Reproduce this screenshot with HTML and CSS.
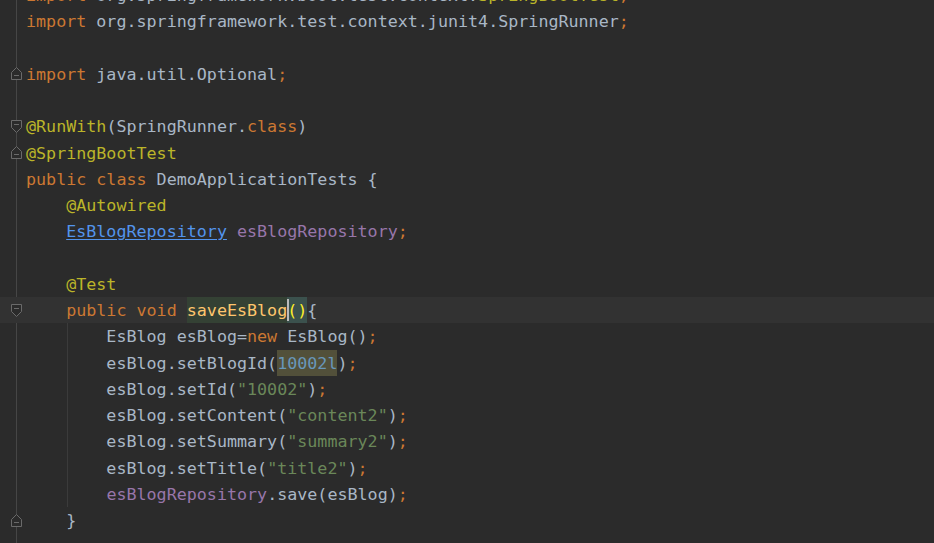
FILE: index.html
```html
<!DOCTYPE html>
<html lang="en">
<head>
    <meta charset="UTF-8">
    <title>DemoApplicationTests.java</title>
    <link rel="stylesheet" href="styles.css">
</head>
<body>
    <div class="editor">
        <div class="line"><span class="fold"></span><span class="code"><span class="kw">import</span> org.springframework.boot.test.context.<span class="ann">SpringBootTest</span><span class="kw">;</span></span></div>
        <div class="line"><span class="fold"></span><span class="code"><span class="kw">import</span> org.springframework.test.context.junit4.SpringRunner<span class="kw">;</span></span></div>
        <div class="line"><span class="fold"></span><span class="code"> </span></div>
        <div class="line"><span class="fold"><svg width="11" height="13" viewBox="0 0 11 13"><path class="mark" d="M0.5 12.5H10.5V5.5L5.5 0.5L0.5 5.5Z"/><path class="minus" d="M3 8.5H8"/></svg></span><span class="code"><span class="kw">import</span> java.util.Optional<span class="kw">;</span></span></div>
        <div class="line"><span class="fold"></span><span class="code"> </span></div>
        <div class="line"><span class="fold"><svg width="11" height="13" viewBox="0 0 11 13"><path class="mark" d="M0.5 0.5H10.5V7.5L5.5 12.5L0.5 7.5Z"/><path class="minus" d="M3 4.5H8"/></svg></span><span class="code"><span class="ann">@RunWith</span>(SpringRunner.<span class="kw">class</span>)</span></div>
        <div class="line"><span class="fold"><svg width="11" height="13" viewBox="0 0 11 13"><path class="mark" d="M0.5 12.5H10.5V5.5L5.5 0.5L0.5 5.5Z"/><path class="minus" d="M3 8.5H8"/></svg></span><span class="code"><span class="ann">@SpringBootTest</span></span></div>
        <div class="line"><span class="fold"></span><span class="code"><span class="kw">public class</span> DemoApplicationTests {</span></div>
        <div class="line"><span class="fold"></span><span class="code">    <span class="ann">@Autowired</span></span></div>
        <div class="line"><span class="fold"></span><span class="code">    <span class="link">EsBlogRepository</span> <span class="field">esBlogRepository</span><span class="kw">;</span></span></div>
        <div class="line"><span class="fold"></span><span class="code"> </span></div>
        <div class="line"><span class="fold"></span><span class="code">    <span class="ann">@Test</span></span></div>
        <div class="line current"><span class="fold"><svg width="11" height="13" viewBox="0 0 11 13"><path class="mark" d="M0.5 0.5H10.5V7.5L5.5 12.5L0.5 7.5Z"/><path class="minus" d="M3 4.5H8"/></svg></span><span class="code">    <span class="kw">public void</span> <span class="decl">saveEsBlog</span><span class="caret"></span><span class="paren">()</span>{</span></div>
        <div class="body">
            <div class="line"><span class="fold"></span><span class="code">        EsBlog esBlog=<span class="kw">new</span> EsBlog()<span class="kw">;</span></span></div>
            <div class="line"><span class="fold"></span><span class="code">        esBlog.setBlogId(<span class="num">10002l</span>)<span class="kw">;</span></span></div>
            <div class="line"><span class="fold"></span><span class="code">        esBlog.setId(<span class="str">"10002"</span>)<span class="kw">;</span></span></div>
            <div class="line"><span class="fold"></span><span class="code">        esBlog.setContent(<span class="str">"content2"</span>)<span class="kw">;</span></span></div>
            <div class="line"><span class="fold"></span><span class="code">        esBlog.setSummary(<span class="str">"summary2"</span>)<span class="kw">;</span></span></div>
            <div class="line"><span class="fold"></span><span class="code">        esBlog.setTitle(<span class="str">"title2"</span>)<span class="kw">;</span></span></div>
            <div class="line"><span class="fold"></span><span class="code">        <span class="field">esBlogRepository</span>.save(esBlog)<span class="kw">;</span></span></div>
        </div>
        <div class="line"><span class="fold"><svg width="11" height="13" viewBox="0 0 11 13"><path class="mark" d="M0.5 12.5H10.5V5.5L5.5 0.5L0.5 5.5Z"/><path class="minus" d="M3 8.5H8"/></svg></span><span class="code">    }</span></div>
    </div>
</body>
</html>
```

FILE: styles.css
```css
* {
    margin: 0;
    padding: 0;
    box-sizing: border-box;
}

html, body {
    background: #2b2b2b;
    height: 100%;
    overflow: hidden;
}

/* editor with the gutter separator line */
.editor {
    margin-top: -18px;
    min-height: 600px;
    font-family: 'DejaVu Sans Mono', monospace;
    font-size: 16.7px;
    color: #a9b7c6;
    background-image: linear-gradient(#464646, #464646);
    background-size: 1px 100%;
    background-position: 16px 0;
    background-repeat: no-repeat;
}

.line {
    display: flex;
    height: 26.26px;
    align-items: center;
}

.line.current {
    background: #323232;
}

.fold {
    width: 26px;
    flex-shrink: 0;
    display: flex;
    align-items: center;
    padding-left: 11px;
}

.fold svg {
    display: block;
}

.mark {
    fill: #2b2b2b;
    stroke: #6a6a6a;
    stroke-width: 1;
}

.minus {
    stroke: #6a6a6a;
    stroke-width: 1;
}

.code {
    display: block;
    white-space: pre;
    line-height: 26.26px;
    height: 26.26px;
}

/* indent guide of the method body */
.body {
    background-image: linear-gradient(#3b3b3b, #3b3b3b);
    background-size: 1px 100%;
    background-position: 67px 0;
    background-repeat: no-repeat;
}

.kw { color: #cc7832; }
.ann { color: #bbb529; }
.str { color: #6a8759; }
.field { color: #9876aa; }

.link {
    color: #5394ec;
    text-decoration: underline;
    text-underline-offset: 2px;
}

.decl,
.paren,
.num {
    display: inline-block;
    line-height: 26.26px;
    vertical-align: top;
}

.decl {
    color: #ffc66d;
    background: #344134;
}

.paren {
    color: #ffef28;
    background: #3b514d;
}

.num {
    color: #6897bb;
    background: #52503a;
}

.caret {
    display: inline-block;
    width: 2px;
    height: 22px;
    margin-top: 2px;
    margin-right: -2px;
    vertical-align: top;
    background: #bbbbbb;
    position: relative;
    z-index: 1;
}
```
